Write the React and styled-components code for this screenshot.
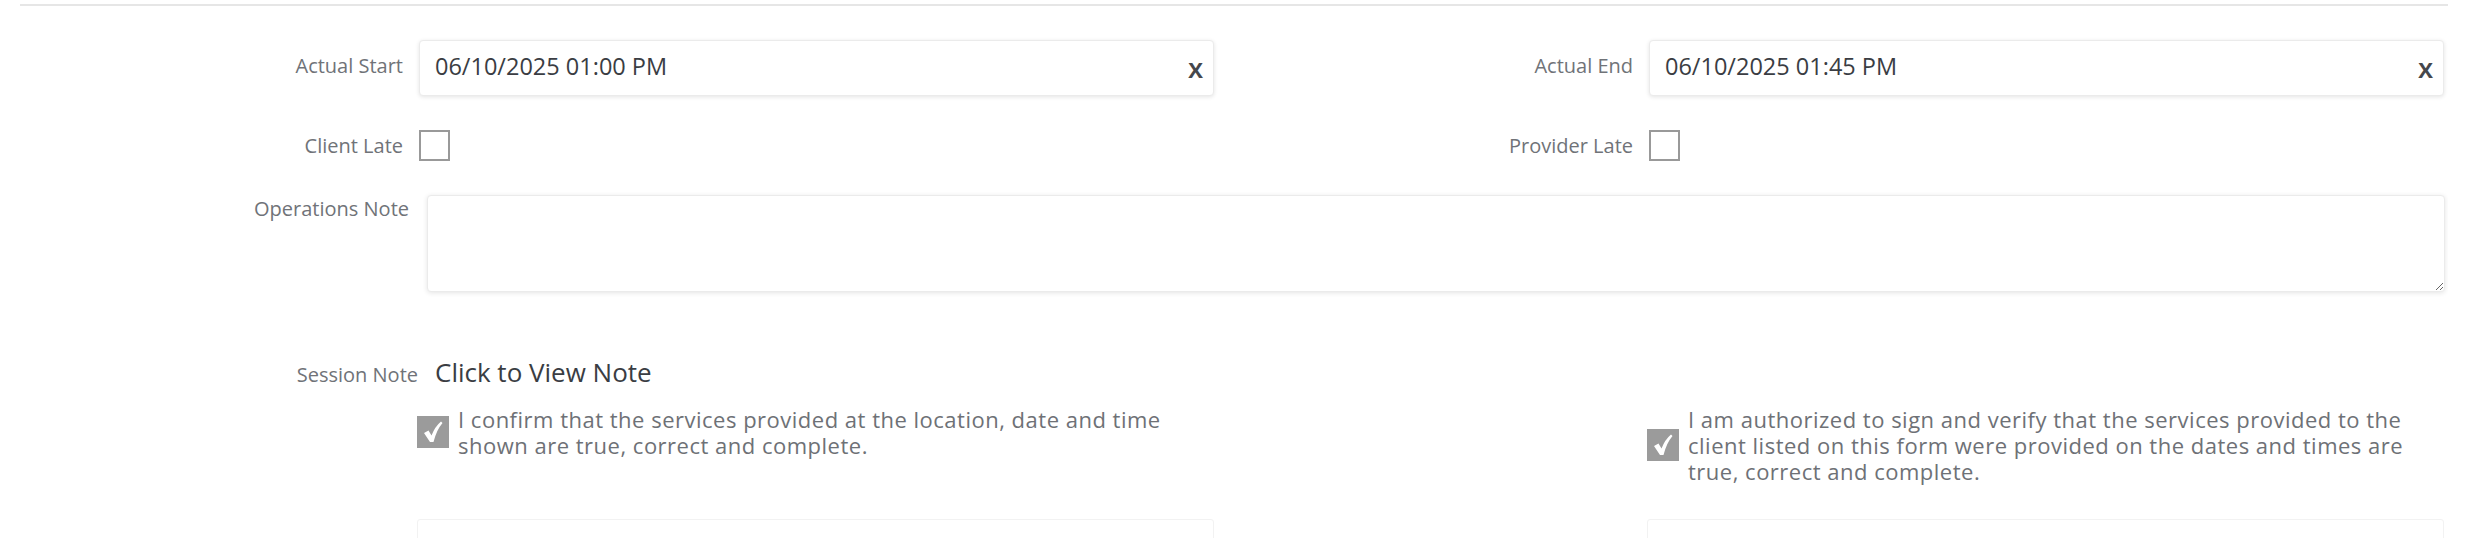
import React from 'react';
import styled, { createGlobalStyle } from 'styled-components';

const GlobalStyle = createGlobalStyle`
  html, body {
    margin: 0;
    padding: 0;
    background: #ffffff;
    font-family: "Open Sans", "Noto Sans", Arial, sans-serif;
  }
`;

export default function App() {
  return (
    <>
      <GlobalStyle />
      <Page>
        <Rule />
        <Columns>
          <Field label='Actual Start'>
            <DateBox value='06/10/2025 01:00 PM' />
          </Field>
          <Field label='Actual End'>
            <DateBox value='06/10/2025 01:45 PM' />
          </Field>
        </Columns>

        <Columns $top={34}>
          <Field label='Client Late' $center>
            <LateBox type='checkbox' aria-label='Client Late' />
          </Field>
          <Field label='Provider Late' $center>
            <LateBox type='checkbox' aria-label='Provider Late' />
          </Field>
        </Columns>

        <NoteRow>
          <Label $top>Operations Note</Label>
          <NoteArea />
        </NoteRow>

        <SessionRow>
          <Label>Session Note</Label>
          <ViewLink>Click to View Note</ViewLink>
        </SessionRow>

        <Columns $top={16} $start>
          <Field>
            <Confirm>
              <CheckMark />
              <ConfirmText>
                I confirm that the services provided at the location, date and time shown are true, correct and complete.
              </ConfirmText>
            </Confirm>
          </Field>
          <Field>
            <Confirm>
              <CheckMark />
              <ConfirmText>
                I am authorized to sign and verify that the services provided to the client listed on this form were provided on the dates and times are true, correct and complete.
              </ConfirmText>
            </Confirm>
          </Field>
        </Columns>

        <Columns $top={35}>
          <Field>
            <SignBox />
          </Field>
          <Field>
            <SignBox />
          </Field>
        </Columns>
      </Page>
    </>
  );
}

function Field({ label, children, $center }) {
  return (
    <FieldRow>
      <Label $lift={!$center && label}>{label}</Label>
      {children}
    </FieldRow>
  );
}

function DateBox({ value }) {
  return (
    <InputWrap>
      <DateInput readOnly value={value} />
      <Clear>X</Clear>
    </InputWrap>
  );
}

function CheckMark() {
  return (
    <Tick>
      <svg width='20' height='24' viewBox='0 0 20 24'>
        <path d='M1 13 L5.5 10.5 L8.5 15.5 Q12 6.5 18 1.5 L19.5 3 Q13.5 10 10.5 22 L7 22 Z' fill='#ffffff' />
      </svg>
    </Tick>
  );
}

const Page = styled.div`
  width: 2428px;
  padding: 4px 0 0 20px;
  overflow: hidden;
  height: 534px;
`;

const Rule = styled.div`
  height: 2px;
  background: #e6e6e6;
  margin-bottom: 34px;
`;

const Columns = styled.div`
  display: grid;
  grid-template-columns: 1196px 1196px;
  column-gap: 34px;
  align-items: ${p => (p.$start ? 'start' : 'center')};
  margin-top: ${p => p.$top || 0}px;
`;

const FieldRow = styled.div`
  display: grid;
  grid-template-columns: 383px 797px;
  column-gap: 16px;
  align-items: center;
`;

const Label = styled.label`
  text-align: right;
  font-size: 20px;
  line-height: 27px;
  color: #707378;
  align-self: ${p => (p.$top ? 'start' : 'auto')};
  padding-bottom: ${p => (p.$lift ? '5px' : '0')};
`;

const InputWrap = styled.div`
  position: relative;
  display: flex;
  align-items: center;
  height: 56px;
  width: 795px;
  box-sizing: border-box;
  background: #fff;
  border: 1px solid #ebebeb;
  border-radius: 4px;
  box-shadow: 0 1px 4px rgba(0, 0, 0, 0.11);
`;

const DateInput = styled.input`
  flex: 1;
  border: none;
  outline: none;
  background: transparent;
  font-family: "Open Sans", Arial, sans-serif;
  font-size: 23.5px;
  color: #3a3d43;
  padding: 0 0 5px 15px;
`;

const Clear = styled.span`
  font-size: 22px;
  font-weight: 700;
  color: #45474c;
  padding: 2px 10px 0 0;
`;

const LateBox = styled.input`
  appearance: none;
  margin: 0;
  width: 31px;
  height: 31px;
  box-sizing: border-box;
  border: 2px solid #999999;
  background: #fff;
`;

const NoteRow = styled.div`
  display: grid;
  grid-template-columns: 389px 2018px;
  column-gap: 18px;
  margin-top: 34px;
`;

const NoteArea = styled.textarea`
  height: 97px;
  box-sizing: border-box;
  border: 1px solid #ebebeb;
  border-radius: 4px;
  box-shadow: 0 1px 5px rgba(0, 0, 0, 0.11);
  resize: vertical;
  outline: none;
  font-family: "Open Sans", Arial, sans-serif;
`;

const SessionRow = styled.div`
  display: grid;
  grid-template-columns: 398px auto;
  column-gap: 17px;
  align-items: baseline;
  margin-top: 62px;
  justify-content: start;
`;

const ViewLink = styled.span`
  font-size: 26px;
  color: #3a3d43;
  cursor: pointer;
`;

const Confirm = styled.div`
  display: flex;
  align-items: center;
  gap: 9px;
  margin-left: -2px;
`;

const Tick = styled.span`
  flex: none;
  width: 32px;
  height: 32px;
  background: #9b9b9b;
  display: flex;
  align-items: center;
  justify-content: center;
`;

const ConfirmText = styled.p`
  margin: 0;
  width: 740px;
  font-size: 22px;
  letter-spacing: 0.5px;
  line-height: 26px;
  color: #6e7176;
`;

const SignBox = styled.div`
  width: 797px;
  height: 90px;
  margin-left: -2px;
  border: 1px solid #f2f2f2;
  border-radius: 3px;
  box-sizing: border-box;
`;
